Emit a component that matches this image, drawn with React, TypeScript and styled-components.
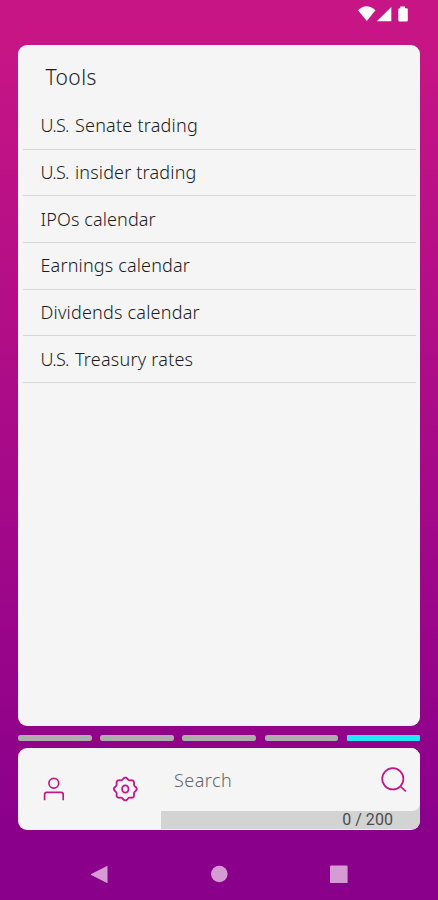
import React from "react";
import styled, { createGlobalStyle } from "styled-components";

const GlobalStyle = createGlobalStyle`
  * { box-sizing: border-box; }
  html, body { margin: 0; padding: 0; }
  body { font-family: "Noto Sans", "Open Sans", sans-serif; font-weight: 300; overflow: hidden; }
  svg { display: block; }
`;

const ACCENT = "#c71585";

const Screen = styled.div`
  width: 438px;
  height: 900px;
  display: flex;
  flex-direction: column;
  background: linear-gradient(180deg, #c71585 0, #c71585 40px, #8b008b 820px);
`;

const StatusBar = styled.header`
  height: 45px;
  flex: none;
  display: flex;
  justify-content: flex-end;
  padding: 6px 28px 0 0;
`;

const Panel = styled.main`
  height: 681px;
  flex: none;
  margin: 0 18px;
  padding: 0 4px 0 5px;
  border-radius: 9px;
  background: #f5f5f5;
`;

const Title = styled.h1`
  margin: 0;
  height: 58px;
  padding: 19px 0 0 22.5px;
  font-size: 21px;
  line-height: 27px;
  font-weight: 300;
  letter-spacing: 0.4px;
  color: #1c1c1c;
`;

const List = styled.ul`
  list-style: none;
  margin: 0;
  padding: 0;
`;

const Row = styled.li<{ $spacing: number }>`
  height: 46.65px;
  padding: 10.4px 0 0 17.5px;
  border-bottom: 1px solid #d6d6d6;
  font-size: 18px;
  line-height: 25px;
  letter-spacing: ${(p) => p.$spacing}px;
  white-space: nowrap;
  color: #1c1c1c;
`;

const Abbreviation = styled.span`
  letter-spacing: -0.8px;
  margin-right: 1.5px;
`;

const Pager = styled.div`
  height: 22px;
  flex: none;
  margin: 0 17.5px 0 18px;
  padding-top: 9px;
  display: grid;
  grid-template-columns: repeat(5, 1fr);
  column-gap: 8.5px;
`;

const Segment = styled.span<{ $active?: boolean }>`
  height: 5.5px;
  border-radius: ${(p) => (p.$active ? "1px" : "2.5px")};
  background: ${(p) => (p.$active ? "#22e8f5" : "#adadad")};
`;

const Dock = styled.section`
  height: 82px;
  flex: none;
  margin: 0 18px;
  display: flex;
  border-radius: 9px;
  overflow: hidden;
  background: #f5f5f5;
`;

const Actions = styled.div`
  width: 143px;
  flex: none;
  display: flex;
  align-items: center;
  gap: 46px;
  padding-left: 23px;
`;

const IconButton = styled.button`
  padding: 0;
  border: 0;
  background: none;
  color: ${ACCENT};
`;

const SearchArea = styled.div`
  flex: 1;
  height: 81px;
  display: flex;
  flex-direction: column;
  background: #d3d3d3;
`;

const SearchField = styled.div`
  height: 63px;
  flex: none;
  display: flex;
  align-items: center;
  justify-content: space-between;
  padding: 1px 12.5px 0 13px;
  border-bottom-right-radius: 8px;
  background: #f5f5f5;
`;

const Placeholder = styled.span`
  font-size: 18px;
  line-height: 25px;
  letter-spacing: 0.45px;
  padding-top: 1px;
  color: #666;
`;

const Counter = styled.span`
  align-self: flex-end;
  padding-right: 27px;
  font-family: Roboto, sans-serif;
  font-size: 16px;
  line-height: 18px;
  font-weight: 400;
  letter-spacing: 0.05px;
  color: #4b4b4b;
`;

const NavBar = styled.nav`
  flex: 1;
  display: flex;
  justify-content: space-between;
  align-items: flex-start;
  padding: 35px 90px 0 90px;
`;

const TOOLS = [
  { prefix: "U.S.", label: "Senate trading", spacing: 0.22 },
  { prefix: "U.S.", label: "insider trading", spacing: 0.17 },
  { label: "IPOs calendar", spacing: 0.12 },
  { label: "Earnings calendar", spacing: 0.16 },
  { label: "Dividends calendar", spacing: 0.21 },
  { prefix: "U.S.", label: "Treasury rates", spacing: 0.22 },
];

const gearPath =
  Array.from({ length: 96 }, (_, i) => {
    const a = (i / 96) * Math.PI * 2;
    const r = 10.5 + 0.95 * Math.cos(8 * a);
    return `${i ? "L" : "M"}${(13 + r * Math.sin(a)).toFixed(2)} ${(13 - r * Math.cos(a)).toFixed(2)}`;
  }).join("") + "Z";

export default function App() {
  return (
    <>
      <GlobalStyle />
      <Screen>
        <StatusBar>
          <svg width="53" height="17" viewBox="0 0 53 17" fill="#fff">
            <path d="M1 4.2 Q9.5-3.6 18.5 4.2 L9.8 15Z" />
            <path d="M19.8 15.2 L34.3 1 V15.2Z" />
            <path d="M41.8 2.2 H43.3 V.4 H48 V2.2 H49.5 Q50.8 2.2 50.8 3.5 V14.2 Q50.8 15.5 49.5 15.5 H42.6 Q41.3 15.5 41.3 14.2 V3.5 Q41.3 2.2 42.6 2.2Z" />
          </svg>
        </StatusBar>
        <Panel>
          <Title>Tools</Title>
          <List>
            {TOOLS.map((t) => (
              <Row key={t.label} $spacing={t.spacing}>
                {t.prefix && <><Abbreviation>{t.prefix}</Abbreviation>{" "}</>}
                {t.label}
              </Row>
            ))}
          </List>
        </Panel>
        <Pager>
          <Segment />
          <Segment />
          <Segment />
          <Segment />
          <Segment $active />
        </Pager>
        <Dock>
          <Actions>
            <IconButton aria-label="Profile">
              <svg width="25" height="26" viewBox="0 0 25 26" fill="none" stroke="currentColor" strokeWidth="1.7">
                <circle cx="12.8" cy="7.3" r="4.9" />
                <path d="M3.6 24.2 V18.5 Q3.6 16.3 5.8 16.3 H20 Q22.2 16.3 22.2 18.5 V24.2" />
              </svg>
            </IconButton>
            <IconButton aria-label="Settings">
              <svg width="26" height="26" viewBox="-.3 0 26 26" fill="none" stroke="currentColor" strokeWidth="1.8">
                <path d={gearPath} strokeLinejoin="round" />
                <ellipse cx="13" cy="13" rx="3.2" ry="3.7" />
              </svg>
            </IconButton>
          </Actions>
          <SearchArea>
            <SearchField>
              <Placeholder>Search</Placeholder>
              <IconButton aria-label="Search">
                <svg width="28" height="28" viewBox="0 0 28 28" fill="none" stroke="currentColor" strokeWidth="1.7">
                  <circle cx="12.8" cy="12.8" r="10.6" />
                  <path d="M20 20 L25.8 25.4" />
                </svg>
              </IconButton>
            </SearchField>
            <Counter>0 / 200</Counter>
          </SearchArea>
        </Dock>
        <NavBar>
          <svg width="18" height="19" viewBox="0 0 18 19" fill="#d49bd4">
            <path d="M17.5 .7 V18.2 L1.2 10 Q.6 9.5 1.2 9Z" />
          </svg>
          <svg width="18" height="19" viewBox="0 0 18 19" fill="#d49bd4">
            <circle cx="9.3" cy="9" r="8.3" />
          </svg>
          <svg width="18" height="19" viewBox="0 0 18 19" fill="#d49bd4">
            <rect x="0" y=".5" width="17.6" height="17.6" rx="1.2" />
          </svg>
        </NavBar>
      </Screen>
    </>
  );
}
